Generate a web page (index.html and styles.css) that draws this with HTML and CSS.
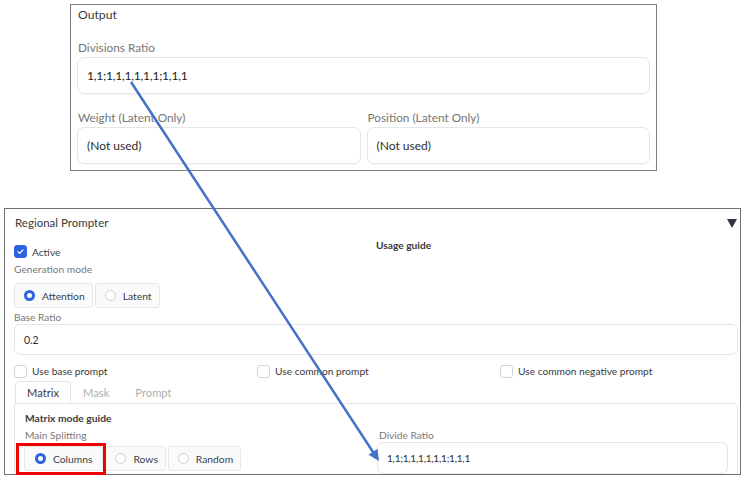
FILE: index.html
```html
<!DOCTYPE html>
<html lang="en">
<head>
<meta charset="utf-8">
<title>Regional Prompter</title>
<link rel="stylesheet" href="styles.css">
</head>
<body>
<div class="page">
  <section class="out-card">
    <div class="out-title">Output</div>
    <div class="out-label first">Divisions Ratio</div>
    <div class="out-input mono">1,1;1,1,1,1,1,1;1,1,1</div>
    <div class="out-row">
      <div class="out-col">
        <div class="out-label">Weight (Latent Only)</div>
        <div class="out-input">(Not used)</div>
      </div>
      <div class="out-col">
        <div class="out-label">Position (Latent Only)</div>
        <div class="out-input">(Not used)</div>
      </div>
    </div>
  </section>

  <section class="rp-card">
    <div class="rp-head">
      <span class="rp-title">Regional Prompter</span>
      <span class="caret"></span>
    </div>
    <div class="rp-top">
      <div class="rp-left">
        <label class="check-row"><span class="cb checked"><svg viewBox="0 0 14 14" width="14" height="14"><path d="M3.8 7.2 L6 9.3 L10.2 4.9" fill="none" stroke="#fff" stroke-width="1.6" stroke-linecap="round" stroke-linejoin="round"/></svg></span><span class="cb-text dark">Active</span></label>
        <div class="lbl gen">Generation mode</div>
        <div class="radio-group">
          <span class="radio-btn"><span class="rd on"></span>Attention</span>
          <span class="radio-btn"><span class="rd"></span>Latent</span>
        </div>
      </div>
      <div class="rp-right">
        <div class="guide">Usage guide</div>
      </div>
    </div>
    <div class="lbl base">Base Ratio</div>
    <div class="in-box">0.2</div>
    <div class="cb-grid">
      <label class="check-row"><span class="cb"></span><span class="cb-text">Use base prompt</span></label>
      <label class="check-row"><span class="cb"></span><span class="cb-text">Use common prompt</span></label>
      <label class="check-row"><span class="cb"></span><span class="cb-text">Use common negative prompt</span></label>
    </div>
    <div class="tabs">
      <span class="tab active">Matrix</span>
      <span class="tab mask">Mask</span>
      <span class="tab">Prompt</span>
    </div>
    <div class="tab-body">
      <div class="tb-left">
        <div class="guide2">Matrix mode guide</div>
        <div class="lbl split">Main Splitting</div>
        <div class="radio-group">
          <span class="radio-btn"><span class="rd on"></span>Columns</span>
          <span class="radio-btn"><span class="rd"></span>Rows</span>
          <span class="radio-btn"><span class="rd"></span>Random</span>
        </div>
      </div>
      <div class="tb-right">
        <div class="lbl split">Divide Ratio</div>
        <div class="in-box small mono">1,1;1,1,1,1,1,1;1,1,1</div>
      </div>
    </div>
  </section>

  <div class="highlight"></div>
  <svg class="arrow" width="746" height="479" viewBox="0 0 746 479">
    <line x1="131" y1="82" x2="373" y2="452" stroke="#4472c4" stroke-width="2.5"/>
    <polygon points="379,461 368.5,454.8 377.5,448.8" fill="#4472c4"/>
  </svg>
</div>
</body>
</html>
```
FILE: styles.css
```css
* { box-sizing: border-box; }
html, body { margin: 0; padding: 0; background: #fff; }
body { font-family: Lato, "Noto Sans", sans-serif; color: #374151; }
.page { position: relative; width: 746px; height: 479px; overflow: hidden; padding-top: 4px; }

/* Output card */
.out-card {
  margin-left: 70px; width: 587px; height: 167px;
  border: 1px solid #7b7b7b; padding: 0 6px 0 6px; background: #fff;
}
.out-title { font-size: 12.2px; line-height: 20px; color: #3a3a3a; padding-left: 1px; }
.out-label { font-size: 11.8px; line-height: 19px; color: #767676; padding-left: 1px; margin-top: 14px; }
.out-label.first { margin-top: 13px; }
.out-input {
  height: 37px; border: 1px solid #e6e6e6; border-radius: 7px;
  padding-left: 9px; display: flex; align-items: center;
  font-size: 12px; color: #2e2e2e; box-shadow: 0 1px 1px rgba(0,0,0,0.03);
}
.mono { letter-spacing: -0.2px; color: #222; }
.out-row { display: grid; grid-template-columns: 1fr 1fr; column-gap: 6px; }

/* Regional Prompter card */
.rp-card {
  margin-top: 37px; margin-left: 4px; width: 737px; height: 267px;
  border: 1px solid #707070; padding: 0 2px 0 9px; overflow: hidden; background: #fff;
}
.rp-head { display: flex; justify-content: space-between; align-items: center; padding: 5px 1px 0 1px; height: 23px; }
.rp-title { font-size: 11.5px; line-height: 18px; color: #3a3a3a; }
.caret { width: 0; height: 0; border-left: 5.5px solid transparent; border-right: 5.5px solid transparent; border-top: 9px solid #2f3640; margin-top: 1px; }
.rp-top { display: grid; grid-template-columns: 362px 1fr; margin-top: 5px; }
.check-row { display: flex; align-items: center; gap: 5px; font-size: 10.2px; line-height: 16px; color: #3a3a3a; }
.rp-left .check-row { padding-top: 5px; height: 24px; }
.cb { width: 13px; height: 13px; border: 1px solid #d4d4d8; border-radius: 3px; background: #fff; display: inline-flex; align-items: center; justify-content: center; flex: none; }
.cb.checked { background: #2b63e0; border-color: #2b63e0; }
.cb.checked svg { width: 13px; height: 13px; }
.cb-text.dark { color: #374151; }
.lbl { font-size: 10.2px; line-height: 16px; color: #7a7a7a; padding-left: 0; }
.gen { margin-top: 0; }
.radio-group { display: flex; gap: 2px; margin-top: 6px; }
.radio-btn {
  display: inline-flex; align-items: center; gap: 7px; height: 25px;
  padding: 0 7px 0 9px; border: 1px solid #e8e8e8; border-radius: 3px;
  background: #fafafa; font-size: 10.3px; color: #374151;
}
.rd { width: 11px; height: 11px; border-radius: 50%; border: 1px solid #cfcfcf; background: #fff; flex: none; }
.rd.on { border: 3.5px solid #2b63e0; }
.guide { font-size: 10.2px; font-weight: 700; line-height: 16px; color: #3a3a3a; padding-left: 0; }
.lbl.base { margin-top: 2px; line-height: 14px; }
.in-box {
  height: 31px; border: 1px solid #e6e6e6; border-radius: 6px; display: flex; align-items: center;
  padding-left: 9px; font-size: 10.5px; color: #2e2e2e;
}
.in-box.small { font-size: 10px; padding-left: 9px; }
.cb-grid { display: grid; grid-template-columns: 243px 243px 1fr; margin-top: 8px; }
.cb-grid .check-row { height: 16px; }
.tabs { display: flex; margin-top: 2px; height: 22px; align-items: stretch; }
.tab { padding: 0 12px; font-size: 11.2px; color: #b0b0b0; display: flex; align-items: center; border: 1px solid transparent; border-bottom: none; border-radius: 5px 5px 0 0; }
.tab.active { color: #3a3a3a; border-color: #e4e4e4; margin-left: 1px; background: #fff; padding: 0 11px; }
.tab.mask { padding-left: 11px; padding-right: 12px; }
.tab-body {
  border: 1px solid #e6e6e6; border-radius: 0 5px 0 0; height: 80px;
  display: grid; grid-template-columns: 352px 1fr; padding: 6px 9px 0 10px;
}
.guide2 { font-size: 10.3px; font-weight: 700; line-height: 16px; color: #3a3a3a; }
.lbl.split { line-height: 16px; margin-top: 1px; }
.tb-left .radio-group { margin-top: 3px; margin-left: -1px; }
.tb-left .radio-btn:first-child { padding-left: 10px; padding-right: 10px; }
.tb-right { padding-top: 17px; }
.tb-right .lbl { margin-top: 0; padding-left: 2px; }
.tb-right .in-box { margin-top: -1px; height: 32px; }

.highlight { position: absolute; left: 16px; top: 443px; width: 90px; height: 32px; border: 3px solid #f00000; }
.arrow { position: absolute; left: 0; top: 0; pointer-events: none; }
```
